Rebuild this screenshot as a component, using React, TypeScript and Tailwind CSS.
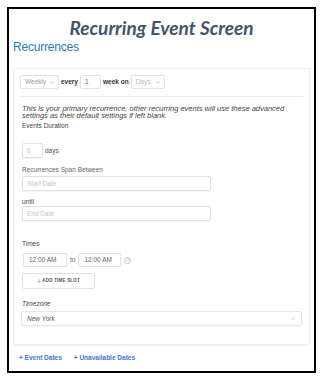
import React from 'react';

const Chevron = ({ className = '' }: { className?: string }) => (
  <svg viewBox="0 0 10 6" className={className} fill="none" stroke="currentColor" strokeWidth="1.4">
    <path d="M1 1l4 4 4-4" />
  </svg>
);

const Label: React.FC<{ children: React.ReactNode; className?: string }> = ({ children, className = '' }) => (
  <div className={`text-[6.5px] leading-[8px] text-[#444] ${className}`}>{children}</div>
);

const Field: React.FC<{ placeholder: string; className?: string }> = ({ placeholder, className = '' }) => (
  <div
    className={`h-[15px] border border-[#e0e0e0] rounded-[2px] flex items-center px-[4px] text-[6.5px] text-[#c4c4c4] shadow-[0_1px_1px_rgba(0,0,0,0.04)] ${className}`}
  >
    {placeholder}
  </div>
);

export default function App() {
  return (
    <div className="w-[323px] h-[380px] bg-white pt-[7px] px-[7px] font-['Liberation_Sans',Arial,sans-serif]">
      <div className="border-2 border-black h-[366px] flex flex-col">
        <h1 className="mt-[9px] text-center font-['Lato',sans-serif] font-bold italic text-[19px] leading-[20px] text-[#44546a]">
          Recurring Event Screen
        </h1>
        <div className="ml-[4px] mt-[3px] text-[12px] leading-[13px] text-[#2a7ab9] tracking-[-0.2px]">Recurrences</div>

        {/* card */}
        <div className="mx-[4px] mt-[14px] h-[277px] border border-[#efefef] rounded-[2px] shadow-[0_1px_2px_rgba(0,0,0,0.05)] px-[6px] pt-[6px]">
          <div className="flex items-center gap-[2px] h-[14px] text-[6.5px]">
            <div className="w-[39px] h-[14px] border border-[#e3e3e3] rounded-[2px] flex items-center justify-between px-[4px] text-[#9a9a9a]">
              <span>Weekly</span>
              <Chevron className="w-[4px] h-[3px] text-[#999]" />
            </div>
            <span className="text-[#333] font-bold">every</span>
            <div className="w-[21px] h-[14px] border border-[#e3e3e3] rounded-[2px] flex items-center px-[4px] text-[#666]">1</div>
            <span className="text-[#333] font-bold">week on</span>
            <div className="w-[34px] h-[14px] border border-[#e3e3e3] rounded-[2px] flex items-center justify-between px-[4px] text-[#bbb]">
              <span>Days</span>
              <Chevron className="w-[4px] h-[3px] text-[#999]" />
            </div>
          </div>

          <div className="mt-[7px] border-t border-[#ececec]" />

          <p className="mt-[9px] ml-[2px] w-[276px] italic text-[7.5px] leading-[6.5px] text-[#444]">
            This is your primary recurrence, other recurring events will use these advanced settings as their default
            settings if left blank.
          </p>

          <Label className="mt-[3px] ml-[2px]">Events Duration</Label>
          <div className="mt-[13px] ml-[2px] flex items-center gap-[2px]">
            <Field placeholder="0" className="w-[21px] h-[14px]" />
            <span className="text-[6.5px] text-[#555]">days</span>
          </div>

          <Label className="mt-[8px] ml-[2px] text-[#666]">Recurrences Span Between</Label>
          <Field placeholder="Start Date" className="mt-[2px] ml-[2px] w-[189px]" />
          <Label className="mt-[7px] ml-[2px]">until</Label>
          <Field placeholder="End Date" className="ml-[2px] w-[189px]" />

          <Label className="mt-[19px] ml-[2px]">Times</Label>
          <div className="mt-[5px] ml-[3px] flex items-center">
            <div className="w-[44px] h-[14px] border border-[#e3e3e3] rounded-[2px] flex items-center px-[5px] text-[6.5px] text-[#666]">
              12:00 AM
            </div>
            <span className="mx-[3px] text-[6.5px] text-[#666]">to</span>
            <div className="w-[43px] h-[14px] border border-[#e3e3e3] rounded-[2px] flex items-center px-[5px] text-[6.5px] text-[#666]">
              12:00 AM
            </div>
            <div className="ml-[3px] w-[7px] h-[7px] rounded-full border border-[#ccc] flex items-center justify-center text-[3px] text-[#aaa] leading-none">
              24
            </div>
          </div>
          <div className="mt-[6px] ml-[2px] w-[73px] h-[16px] border border-[#e0e0e0] rounded-[2px] flex items-center justify-center text-[4.5px] font-bold tracking-[0.2px] text-[#555] uppercase">
            <span className="text-[7px] font-normal text-[#999] mr-[1px] leading-none">+</span>Add time slot
          </div>

          <Label className="mt-[11px] ml-[2px] italic">Timezone</Label>
          <div className="mt-[3px] ml-[1px] w-[281px] h-[15px] border border-[#e6e6e6] rounded-[2px] shadow-[0_1px_1px_rgba(0,0,0,0.05)] flex items-center justify-between pl-[5px] pr-[6px] text-[6.5px] italic text-[#555]">
            <span>New York</span>
            <Chevron className="w-[4px] h-[3px] text-[#aaa]" />
          </div>
        </div>

        <div className="mt-[8px] ml-[10px] flex gap-[12px] text-[6.5px] font-bold text-[#3c78d8]">
          <span>+ Event Dates</span>
          <span>+ Unavailable Dates</span>
        </div>
      </div>
    </div>
  );
}
